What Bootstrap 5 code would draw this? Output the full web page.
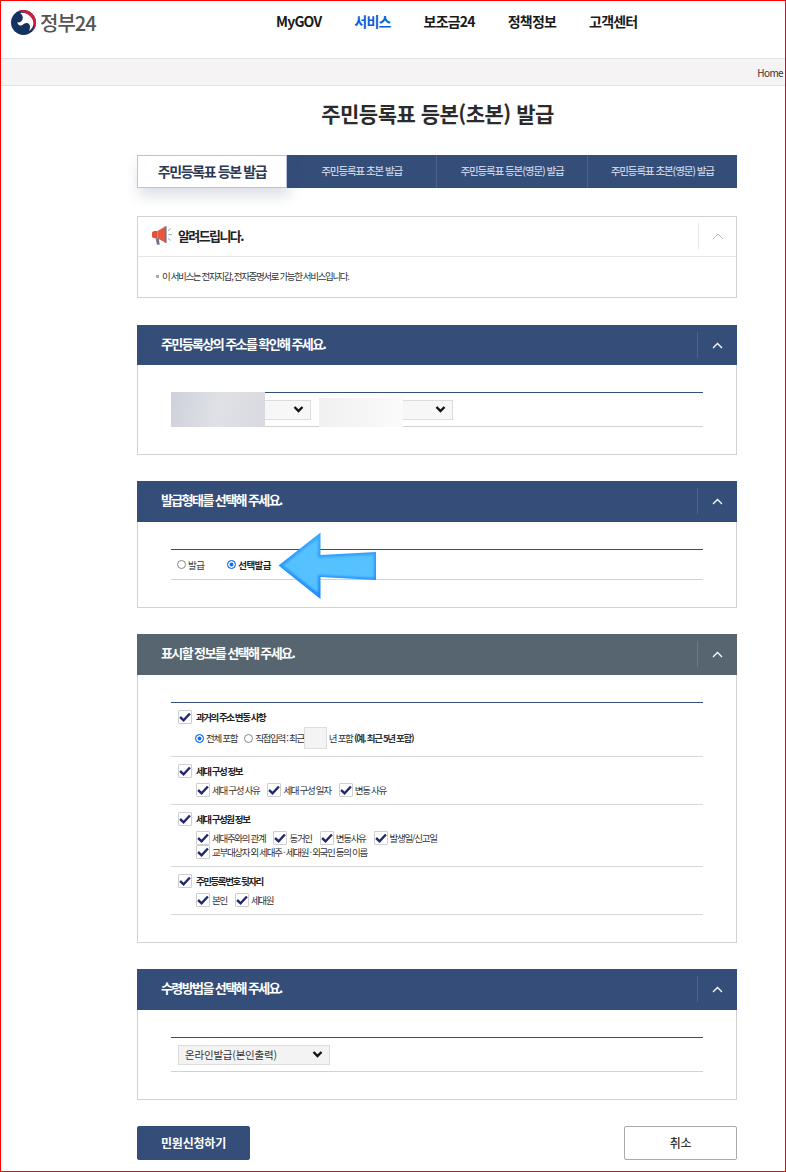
<!DOCTYPE html>
<html lang="ko">
<head>
  <meta charset="UTF-8">
  <title>주민등록표 등본(초본) 발급 - 정부24</title>
  <meta name="viewport" content="width=device-width, initial-scale=1">
  <link href="https://cdn.jsdelivr.net/npm/bootstrap@5.3.0/dist/css/bootstrap.min.css" rel="stylesheet">
  <style>
    body {
      font-family: "Noto Sans CJK KR", "Noto Sans", sans-serif;
      color: #222;
      background: #fff;
    }
    .page-frame {
      height: 1172px;
      border: 1px solid #f00;
      overflow: hidden;
      position: relative;
    }
    /* header */
    .gov-head { height: 57px; padding: 9px 0 0 10px; }
    .gov-logo { width: 87px; gap: 4px; }
    .gov-logo span { font-size: 20px; font-weight: 500; color: #555; letter-spacing: -1px; line-height: 25px; }
    .gov-menu { margin-left: 178px; gap: 33px; }
    .gov-menu a { font-size: 14px; font-weight: 700; color: #1a1a1a; letter-spacing: -0.8px; line-height: 24px; margin-top: -1px; padding: 0; text-decoration: none; }
    .gov-menu a.on { color: #0b5ed7; }
    .crumb-bar { height: 28px; background: #f5f3f4; border-top: 1px solid #e4e3ea; border-bottom: 1px solid #e4e3ea; font-size: 10px; color: #333; padding-right: 2px; letter-spacing: -0.6px; line-height: 27px; }
    .page-title { font-size: 21px; font-weight: 700; color: #2b2b2b; letter-spacing: -0.5px; line-height: 30px; margin: 12px 0 27px; text-align: center; padding-left: 89px; }
    .main-wrap { width: 600px; margin-left: 136px; }
    /* tabs */
    .tab-row { height: 33px; background: #344d79; margin-bottom: 28px; }
    .tab-row > div { flex: 1 1 0; font-size: 10.5px; font-weight: 500; color: #c8d2e4; letter-spacing: -1.1px; text-align: center; line-height: 32px; border-left: 1px solid #4d638b; }
    .tab-row > div.tab-on { flex: 0 0 150px; background: #fff; color: #2c3a55; font-size: 14px; font-weight: 700; letter-spacing: -1.4px; border: 1px solid #b7c3de; box-shadow: 2px 8px 14px rgba(60, 80, 130, .18); line-height: 31px; }
    .tab-row > div.tab-on + div { border-left: 0; }
    /* section cards */
    .sect { border: 1px solid #d2d2d2; border-radius: 0; margin-bottom: 26px; position: relative; }
    .sect.notice-box { margin-bottom: 27px; }
    .sect-head { height: 40px; margin: -1px -1px 0; background: #344d79; color: #fff; padding: 0 0 0 24px; font-size: 13px; font-weight: 700; letter-spacing: -1.6px; line-height: 38px; border: 0; border-radius: 0 !important; }
    .sect-head.tall { height: 41px; }
    .sect-head.slate { background: #56656f; }
    .sect-tool { margin-left: auto; width: 40px; height: 26px; margin-top: 7px; border-left: 1px solid #4d638b; }
    .slate .sect-tool { border-left-color: #6c7a83; }
    .sect-body { padding: 27px 33px 27px; }
    .form-rows { border-top: 1px solid #344d79; border-bottom: 1px solid #d2d2d2; position: relative; }
    .row-line { height: 33px; padding-left: 6px; }
    .row-line.short { height: 29px; gap: 23px; }
    .row-line.short .opt { letter-spacing: -0.6px; }
    .pick { width: 134px; height: 20px; padding: 0 0 0 6px; font-size: 10.5px; letter-spacing: -0.2px; color: #333; border: 1px solid #dcdcdc; border-radius: 0; background-color: #f7f7f7; background-size: 11px 9px; background-position: right 6px center; background-image: url("data:image/svg+xml,%3Csvg xmlns='http://www.w3.org/2000/svg' viewBox='0 0 11 9'%3E%3Cpath d='M1.5 2l4 4 4-4' fill='none' stroke='%23111' stroke-width='2.4'/%3E%3C/svg%3E"); }
    .pick.wide { width: 152px; margin-left: 1px; background-color: #f3f3f3; }
    .blur-a, .blur-b { position: absolute; }
    .blur-a { left: 0; top: -1px; width: 94px; height: 35px; background: linear-gradient(100deg, #ced1db, #dfe1e6 50%, #d8dae0); }
    .blur-b { left: 148px; top: 5px; width: 84px; height: 29px; background: linear-gradient(90deg, #f1f1f1, #f5f5f5 50%, #fbfbfb); }
    /* radios and checkboxes */
    .opt { font-size: 9.5px; letter-spacing: -1.3px; color: #333; line-height: 14px; gap: 2px; }
    .opt.strong { font-weight: 700; color: #222; }
    .opt.group-title { gap: 4px; letter-spacing: -1.45px; }
    .opt .form-check-input { margin: 0; flex: none; float: none; }
    .mini-radio { width: 9px; height: 9px; border-color: #888; }
    .mini-radio:checked { background-color: #0d6efd; border-color: #0d6efd; background-image: none; box-shadow: inset 0 0 0 1.5px #fff; }
    .mini-check { width: 14px; height: 14px; border: 1px solid #cfcfcf; border-radius: 1px !important; }
    .mini-check:checked { background-color: #fff; border-color: #cfcfcf; background-size: 12px 10px; background-image: url("data:image/svg+xml,%3Csvg xmlns='http://www.w3.org/2000/svg' viewBox='0 0 11 9'%3E%3Cpath d='M1 4.500l3.200 3L10 1.300' fill='none' stroke='%2322296e' stroke-width='2.200'/%3E%3C/svg%3E"); }
    .info-rows { border-top: 1px solid #344d79; }
    .info-group { border-bottom: 1px solid #d8d8d8; padding: 7px 0 7px 7px; }
    .info-sub { padding-left: 18px; column-gap: 8px; row-gap: 0; margin-top: 5px; }
    .year-box { width: 23px; height: 22px; background: #f4f4f4; border: 1px solid #dedede; }
    .first-group .info-sub { margin-top: 3px; padding-left: 17px; column-gap: 7px; height: 22px; }
    .first-group .info-sub .tight { margin-right: -7px; }
    .first-group .info-sub .after-box { margin-left: -5px; }
    .notice-head { height: 40px; border-bottom: 1px solid #e6e6e6; padding-left: 13px; font-size: 13px; font-weight: 700; letter-spacing: -1.6px; line-height: 38px; color: #222; gap: 5px; }
    .notice-head .sect-tool { border-left-color: #e6e6e6; width: 38px; margin-top: 6px; }
    .notice-text { height: 40px; padding-left: 18px; font-size: 9.5px; letter-spacing: -1.35px; color: #333; line-height: 38px; }
    .notice-text::before { content: ""; display: inline-block; width: 3px; height: 3px; background: #aaa; margin-right: 3px; vertical-align: 2px; }
    .btn-apply, .btn-cancel { width: 113px; height: 34px; font-size: 12px; font-weight: 500; letter-spacing: -0.2px; padding: 0; border-radius: 2px; }
    .btn-apply { background: #344d79; border-color: #344d79; color: #fff; font-weight: 700; }
    .btn-cancel { background: #fff; border-color: #aaa; color: #333; }
    .blue-arrow { position: absolute; left: 276px; top: 530px; width: 102px; height: 70px; }
  </style>
</head>
<body>
  <div class="page-frame">
    <header class="gov-head d-flex">
      <div class="gov-logo d-flex align-items-start">
        <svg width="25" height="25" viewBox="0 0 25 25">
          <circle cx="12.500" cy="12.500" r="12.500" fill="#14315f"/>
          <path d="M9 3C15 1.500 22 6 22.500 12c.4 4-1.500 7-4.500 9 2-4 1-7.500-2-8-3-.5-4 2.500-6.500 2.500-2 0-3-1.500-3-3.500 1 1 3 .5 4.500-1.500C12.500 8.500 12 5 9 3z" fill="#fff"/>
          <path d="M7 1.300A12.500 12.500 0 0 1 25 12.500a12.500 12.500 0 0 1-3.500 8.700c1.500-3 2.200-6 1-9.500C20.500 5.500 14 1.500 7 1.300z" fill="#d01c3f"/>
        </svg>
        <span>정부24</span>
      </div>
      <nav class="gov-menu nav">
        <a href="#">MyGOV</a>
        <a href="#" class="on">서비스</a>
        <a href="#">보조금24</a>
        <a href="#">정책정보</a>
        <a href="#">고객센터</a>
      </nav>
    </header>
    <div class="crumb-bar text-end">Home</div>
    <h1 class="page-title">주민등록표 등본(초본) 발급</h1>

    <main class="main-wrap">
      <div class="tab-row d-flex">
        <div class="tab-on">주민등록표 등본 발급</div>
        <div>주민등록표 초본 발급</div>
        <div>주민등록표 등본(영문) 발급</div>
        <div>주민등록표 초본(영문) 발급</div>
      </div>

      <section class="sect notice-box card">
        <div class="notice-head d-flex">
          <svg width="22" height="21" viewBox="0 0 24 22" class="mt-2">
            <path d="M4 6h3v8H4a3 3 0 0 1-3-3V9a3 3 0 0 1 3-3z" fill="#e2523a"/>
            <path d="M7 6l9-5v18l-9-5z" fill="#e8583f"/>
            <path d="M15 1h2v18h-2z" fill="#6d7684"/>
            <path d="M5 14h3.500l1 7H6.500z" fill="#6d7684"/>
            <path d="M19 10h4M18.500 6l3-2.500M18.500 14l3 2.500" stroke="#9aa1ad" stroke-width="1"/>
          </svg>
          <span>알려드립니다.</span>
          <div class="sect-tool d-flex align-items-center justify-content-center">
            <svg width="12" height="7" viewBox="0 0 12 7"><path d="M1 6l5-5 5 5" fill="none" stroke="#bbb" stroke-width="1"/></svg>
          </div>
        </div>
        <div class="notice-text">이 서비스는 전자지갑, 전자증명서로 가능한 서비스입니다.</div>
      </section>

      <section class="sect card">
        <div class="sect-head card-header d-flex">
          <span>주민등록상의 주소를 확인해 주세요.</span>
          <div class="sect-tool d-flex align-items-center justify-content-center">
            <svg width="11" height="7" viewBox="0 0 11 7"><path d="M1 6l4.500-4.500L10 6" fill="none" stroke="#fff" stroke-width="1.300"/></svg>
          </div>
        </div>
        <div class="sect-body">
          <div class="form-rows">
            <div class="row-line d-flex align-items-center gap-2">
              <select class="pick form-select" aria-label="시도"><option></option></select>
              <select class="pick form-select" aria-label="시군구"><option></option></select>
            </div>
            <div class="blur-a"></div>
            <div class="blur-b"></div>
          </div>
        </div>
      </section>

      <section class="sect card">
        <div class="sect-head tall card-header d-flex">
          <span>발급형태를 선택해 주세요.</span>
          <div class="sect-tool d-flex align-items-center justify-content-center">
            <svg width="11" height="7" viewBox="0 0 11 7"><path d="M1 6l4.500-4.500L10 6" fill="none" stroke="#fff" stroke-width="1.300"/></svg>
          </div>
        </div>
        <div class="sect-body">
          <div class="form-rows">
            <div class="row-line short d-flex align-items-center">
              <label class="opt d-flex align-items-center"><input class="form-check-input mini-radio" type="radio" name="issue">발급</label>
              <label class="opt strong d-flex align-items-center"><input class="form-check-input mini-radio" type="radio" name="issue" checked>선택발급</label>
            </div>
          </div>
        </div>
      </section>

      <section class="sect card">
        <div class="sect-head tall slate card-header d-flex">
          <span>표시할 정보를 선택해 주세요.</span>
          <div class="sect-tool d-flex align-items-center justify-content-center">
            <svg width="11" height="7" viewBox="0 0 11 7"><path d="M1 6l4.500-4.500L10 6" fill="none" stroke="#fff" stroke-width="1.300"/></svg>
          </div>
        </div>
        <div class="sect-body">
          <div class="info-rows">
            <div class="info-group first-group">
              <label class="opt strong group-title d-flex align-items-center"><input class="form-check-input mini-check" type="checkbox" checked>과거의 주소 변동 사항</label>
              <div class="info-sub d-flex align-items-center opt">
                <label class="opt d-flex align-items-center"><input class="form-check-input mini-radio" type="radio" name="past" checked>전체 포함</label>
                <label class="opt d-flex align-items-center tight"><input class="form-check-input mini-radio" type="radio" name="past">직접입력 : 최근</label>
                <span class="year-box"></span>
                <span class="after-box">년 포함 <b>(예. 최근 5년 포함)</b></span>
              </div>
            </div>
            <div class="info-group">
              <label class="opt strong group-title d-flex align-items-center"><input class="form-check-input mini-check" type="checkbox" checked>세대 구성 정보</label>
              <div class="info-sub d-flex flex-wrap">
                <label class="opt d-flex align-items-center"><input class="form-check-input mini-check" type="checkbox" checked>세대 구성 사유</label>
                <label class="opt d-flex align-items-center"><input class="form-check-input mini-check" type="checkbox" checked>세대 구성 일자</label>
                <label class="opt d-flex align-items-center"><input class="form-check-input mini-check" type="checkbox" checked>변동 사유</label>
              </div>
            </div>
            <div class="info-group">
              <label class="opt strong group-title d-flex align-items-center"><input class="form-check-input mini-check" type="checkbox" checked>세대 구성원 정보</label>
              <div class="info-sub d-flex flex-wrap">
                <label class="opt d-flex align-items-center"><input class="form-check-input mini-check" type="checkbox" checked>세대주와의 관계</label>
                <label class="opt d-flex align-items-center"><input class="form-check-input mini-check" type="checkbox" checked>동거인</label>
                <label class="opt d-flex align-items-center"><input class="form-check-input mini-check" type="checkbox" checked>변동사유</label>
                <label class="opt d-flex align-items-center"><input class="form-check-input mini-check" type="checkbox" checked>발생일/신고일</label>
                <label class="opt d-flex align-items-center w-100"><input class="form-check-input mini-check" type="checkbox" checked>교부대상자 외 세대주 · 세대원 · 외국인 등의 이름</label>
              </div>
            </div>
            <div class="info-group">
              <label class="opt strong group-title d-flex align-items-center"><input class="form-check-input mini-check" type="checkbox" checked>주민등록번호 뒷자리</label>
              <div class="info-sub d-flex flex-wrap">
                <label class="opt d-flex align-items-center"><input class="form-check-input mini-check" type="checkbox" checked>본인</label>
                <label class="opt d-flex align-items-center"><input class="form-check-input mini-check" type="checkbox" checked>세대원</label>
              </div>
            </div>
          </div>
        </div>
      </section>

      <section class="sect card">
        <div class="sect-head tall card-header d-flex">
          <span>수령방법을 선택해 주세요.</span>
          <div class="sect-tool d-flex align-items-center justify-content-center">
            <svg width="11" height="7" viewBox="0 0 11 7"><path d="M1 6l4.500-4.500L10 6" fill="none" stroke="#fff" stroke-width="1.300"/></svg>
          </div>
        </div>
        <div class="sect-body">
          <div class="form-rows">
            <div class="row-line d-flex align-items-center">
              <select class="pick wide form-select" aria-label="수령방법"><option>온라인발급(본인출력)</option></select>
            </div>
          </div>
        </div>
      </section>

      <div class="d-flex justify-content-between">
        <button type="button" class="btn btn-apply">민원신청하기</button>
        <button type="button" class="btn btn-cancel">취소</button>
      </div>
    </main>

    <svg class="blue-arrow" viewBox="0 0 102 70">
      <defs>
        <linearGradient id="arrowEdge" x1="0" y1="0" x2="0" y2="1">
          <stop offset="0" stop-color="#38aaff"/>
          <stop offset="1" stop-color="#1c88fb"/>
        </linearGradient>
        <filter id="arrowSoft" x="-5%" y="-5%" width="110%" height="110%">
          <feGaussianBlur stdDeviation="1"/>
        </filter>
      </defs>
      <path d="M1.500 34.500L43.500 1.500V24L99 21v28l-55.500-3v22z" fill="url(#arrowEdge)"/>
      <path d="M6 34.500L41 7v19.500L97 23.500v23.500L41 44v18z" fill="#54c1ff" filter="url(#arrowSoft)"/>
    </svg>
  </div>
  <script src="https://cdn.jsdelivr.net/npm/bootstrap@5.3.0/dist/js/bootstrap.bundle.min.js"></script>
</body>
</html>
